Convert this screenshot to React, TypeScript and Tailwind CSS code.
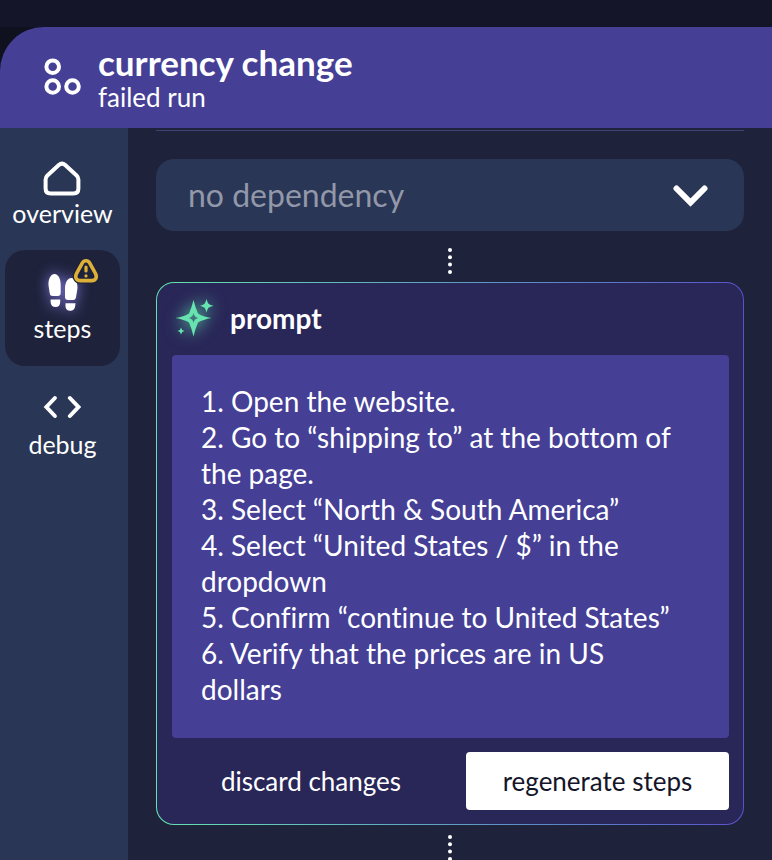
import React from "react";

const promptText = `1. Open the website.
2. Go to “shipping to” at the bottom of the page.
3. Select “North & South America”
4. Select “United States / $” in the dropdown
5. Confirm “continue to United States”
6. Verify that the prices are in US dollars`;

function RunsIcon() {
  return (
    <svg width="38" height="38" viewBox="0 0 38 38" fill="none" stroke="white" strokeWidth="4" aria-hidden="true">
      <circle cx="8.7" cy="8.7" r="6.3" />
      <circle cx="8.7" cy="28.5" r="6.3" />
      <circle cx="28.5" cy="28.5" r="6.3" />
    </svg>
  );
}

function HomeIcon() {
  return (
    <svg width="38" height="36" viewBox="0 0 38 36" fill="none" stroke="white" strokeWidth="4" strokeLinejoin="round" aria-hidden="true">
      <path d="M15.8 5 L4.4 15.4 Q2.6 17 2.6 19.4 V28.5 Q2.6 33.5 7.6 33.5 H30.4 Q35.4 33.5 35.4 28.5 V19.4 Q35.4 17 33.6 15.4 L22.2 5 Q19 2.2 15.8 5 Z" />
    </svg>
  );
}

function StepsIcon() {
  return (
    <svg className="overflow-visible drop-shadow-[0_0_7px_#8478dc]" width="30" height="38" viewBox="0 0 30 38" fill="white" aria-hidden="true">
      <path d="M6.5 0 C10.5 0 12.7 5 12.7 11 V19 Q12.7 22 9.7 22 H4.8 Q2 22 1.8 19.5 L0.6 12 C-0.2 6 2.5 0 6.5 0 Z" />
      <path d="M2.6 25.5 H12.2 V28 Q12.2 33 7.5 33 Q2.8 33 2.6 28 Z" />
      <path d="M23.3 4 C27.5 4 30.2 9.5 29.3 15.5 L28 23.2 Q27.6 26 24.8 26 H20 Q17 26 17 23 V15 C17 9 19.2 4 23.3 4 Z" />
      <path d="M17.5 29.3 H27.5 L27.2 32 Q26.6 36.8 22.3 36.8 Q17.5 36.8 17.5 32 Z" />
    </svg>
  );
}

const warningOutline =
  "M8.4 3.8 C10 1 14 1 15.6 3.8 L21.4 14.4 C23.6 18.6 21.4 21.6 17.8 21.6 H6.2 C2.6 21.6 0.4 18.6 2.6 14.4 Z";

function WarningIcon() {
  return (
    <svg className="overflow-visible" width="24" height="24" viewBox="0 0 24 24" fill="none" strokeLinejoin="round" strokeLinecap="round" aria-hidden="true">
      <path d={warningOutline} fill="#1e223b" stroke="#1e223b" strokeWidth="6" />
      <path d={warningOutline} stroke="#ddb137" strokeWidth="3.6" />
      <path d="M12 8 V12" stroke="#ddb137" strokeWidth="3.2" />
      <path d="M12 16.8 V17" stroke="#ddb137" strokeWidth="3.2" />
    </svg>
  );
}

function CodeIcon() {
  return (
    <svg width="38" height="24" viewBox="0 0 38 24" fill="none" stroke="white" strokeWidth="4" strokeLinecap="round" aria-hidden="true">
      <path d="M11.9 3 L3.4 12 L11.9 21" />
      <path d="M26.9 3 L35.4 12 L26.9 21" />
    </svg>
  );
}

function SparkleIcon() {
  return (
    <svg className="overflow-visible drop-shadow-[0_0_8px_#5fdca9]" width="38" height="38" viewBox="0 0 38 38" fill="#66e3ae" aria-hidden="true">
      <path
        fillRule="evenodd"
        d="M17.5 1 Q19.5 9 22 14.5 Q27 17.500 35.5 19 Q27 20.5 22 23.5 Q19.5 29 17.5 37.5 Q15.5 29 13 23.5 Q8 20.5 -0.5 19 Q8 17.5 13 14.5 Q15.5 9 17.5 1 Z M17.5 14 Q17 18 13 19 Q17 20 17.5 24 Q18 20 22 19 Q18 18 17.5 14 Z"
      />
      <path d="M30.5 0 Q31.3 3 32.5 4.7 Q34.2 6 37.5 6.7 Q34.2 7.5 32.5 8.7 Q31.3 10.5 30.5 13.5 Q29.7 10.5 28.5 8.7 Q26.8 7.5 24 6.7 Q26.8 6 28.5 4.7 Q29.7 3 30.5 0 Z" />
      <path d="M5 28.5 L6.2 31 L8.5 32 L6.2 33 L5 35.5 L3.9 33 L1.5 32 L3.9 31 Z" />
    </svg>
  );
}

function Dots() {
  return (
    <svg width="4" height="26" viewBox="0 0 4 26" fill="white" aria-hidden="true">
      <circle cx="2" cy="2" r="2" />
      <circle cx="2" cy="9.3" r="2" />
      <circle cx="2" cy="16.6" r="2" />
      <circle cx="2" cy="24" r="2" />
    </svg>
  );
}

export default function App() {
  return (
    <div className="flex h-screen flex-col overflow-hidden bg-[#141529] font-[Lato,sans-serif] text-white [font-variant-ligatures:none]">
      <div className="h-[27px] shrink-0" />
      <div className="shrink-0 bg-[#10111f]">
        <header className="flex items-center gap-4 rounded-tl-[44px] bg-[#453f96] pt-[15px] pb-4 pl-11">
          <RunsIcon />
          <div>
            <h1 className="text-[35px] leading-10 font-bold">currency change</h1>
            <p className="text-[26px] leading-[30px]">failed run</p>
          </div>
        </header>
      </div>
      <div className="flex min-h-0 flex-1">
        <nav className="flex w-32 shrink-0 flex-col items-center bg-[#293655] pt-1 pr-[3px] text-[25px] leading-7">
          <a href="#overview" className="flex h-[118px] flex-col items-center gap-[3px] pt-7">
            <HomeIcon />
            overview
          </a>
          <a href="#steps" className="flex h-29 w-[115px] flex-col items-center gap-0.5 rounded-[20px] bg-[#1e223b] pt-6">
            <span className="relative">
              <StepsIcon />
              <span className="absolute -top-[15px] -right-5">
                <WarningIcon />
              </span>
            </span>
            steps
          </a>
          <a href="#debug" className="flex flex-col items-center gap-[11px] pt-[29px]">
            <CodeIcon />
            debug
          </a>
        </nav>
        <main className="flex min-w-0 flex-1 flex-col items-center overflow-hidden bg-[#1e223b] px-7 pt-0.5">
          <hr className="w-full shrink-0 border-[#3d4173]" />
          <div className="relative mt-7 w-full shrink-0">
            <select aria-label="dependency" className="block h-[72px] w-full appearance-none rounded-[18px] bg-[#293655] px-8 text-[32px] text-[#9298a9]">
              <option>no dependency</option>
            </select>
            <svg className="pointer-events-none absolute top-6 right-9" width="36" height="26" viewBox="0 0 36 26" fill="none" stroke="white" strokeWidth="6" strokeLinecap="round" aria-hidden="true">
              <path d="M4.5 5.5 L18.5 19.5 L32.5 5.5" />
            </svg>
          </div>
          <div className="shrink-0 pt-[17px] pb-2">
            <Dots />
          </div>
          <section className="w-full shrink-0 rounded-[18px] bg-linear-to-r from-[#66e3ae] to-[#5a52cd] p-px">
            <div className="flex flex-col rounded-[17px] bg-[#292658] pt-[15px] pr-3.5 pb-3.5 pl-[15px]">
              <div className="mb-[17px] flex items-center gap-4 pl-1">
                <SparkleIcon />
                <h2 className="text-[28px] leading-10 font-bold">
                  <label htmlFor="prompt">prompt</label>
                </h2>
              </div>
              <textarea
                id="prompt"
                rows={9}
                defaultValue={promptText}
                className="block h-[383px] w-full resize-none overflow-hidden rounded bg-[#453f96] pt-7 pr-10 pb-7 pl-[29px] text-[28px] leading-9"
              />
              <div className="mt-3.5 flex h-[58px] text-[26px]">
                <button className="flex-1 pr-4">discard changes</button>
                <button className="w-[263px] rounded bg-white text-[#141529]">regenerate steps</button>
              </div>
            </div>
          </section>
          <div className="shrink-0 pt-2.5">
            <Dots />
          </div>
        </main>
      </div>
    </div>
  );
}
